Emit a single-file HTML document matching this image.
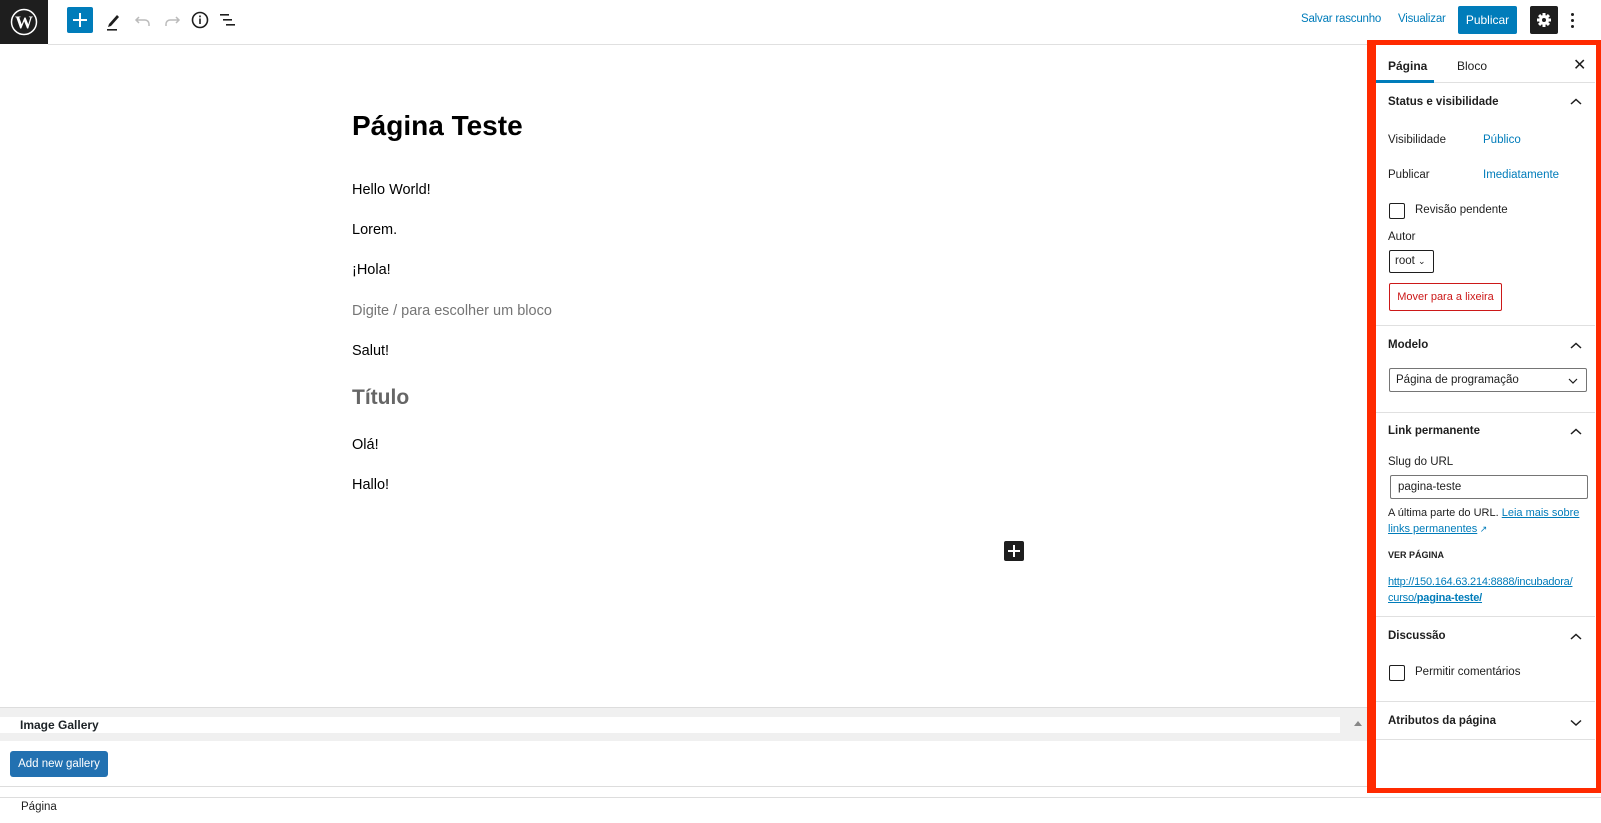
<!DOCTYPE html>
<html><head><meta charset="utf-8"><style>
*{box-sizing:border-box;margin:0;padding:0}
body{width:1601px;height:823px;position:relative;overflow:hidden;background:#fff;font-family:"Liberation Sans",Arial,sans-serif;color:#1e1e1e}
.a{position:absolute;white-space:nowrap}
.t13{font-size:13px}
.blue{color:#007cba}
.ln{position:absolute;height:1px;background:#e0e0e0}
.p{position:absolute;left:352px;font-size:15px;color:#000;line-height:18px}
.cb{position:absolute;width:16px;height:16px;border:1.5px solid #1e1e1e;border-radius:2px}
</style></head><body>
<!-- top bar -->
<div class="a" style="left:0;top:0;width:48px;height:44px;background:#1e1e1e"></div>
<svg class="a" style="left:10px;top:8px" width="28" height="28" viewBox="0 0 28 28"><circle cx="14" cy="14" r="12.5" fill="none" stroke="#fff" stroke-width="1.5"/><text x="14" y="20.5" font-family="Liberation Serif" font-weight="bold" font-size="18" fill="#fff" text-anchor="middle">W</text></svg>
<div class="ln" style="left:48px;top:44px;width:1553px"></div>
<div class="a" style="left:67px;top:7px;width:26px;height:26px;background:#007cba;border-radius:2px"></div>
<div class="a" style="left:73px;top:19px;width:14px;height:2px;background:#fff"></div>
<div class="a" style="left:79px;top:13px;width:2px;height:14px;background:#fff"></div>
<svg class="a" style="left:104px;top:10px" width="18" height="22" viewBox="0 0 18 22"><path d="M5 14 L13 5 L15 7 L7 16 L4 17 Z" fill="#1e1e1e"/><rect x="3" y="19" width="10" height="1.6" fill="#1e1e1e"/></svg>
<svg class="a" style="left:134px;top:12px" width="18" height="18" viewBox="0 0 18 18"><path d="M5 5 L2 8 L5 11 M2 8 H11 A4 4 0 0 1 15 12 V14" fill="none" stroke="#bbb" stroke-width="1.5"/></svg>
<svg class="a" style="left:163px;top:12px" width="18" height="18" viewBox="0 0 18 18"><path d="M13 5 L16 8 L13 11 M16 8 H7 A4 4 0 0 0 3 12 V14" fill="none" stroke="#bbb" stroke-width="1.5"/></svg>
<svg class="a" style="left:190px;top:10px" width="20" height="20" viewBox="0 0 20 20"><circle cx="10" cy="10" r="7.5" fill="none" stroke="#1e1e1e" stroke-width="1.6"/><rect x="9.2" y="8.5" width="1.6" height="5.5" fill="#1e1e1e"/><rect x="9.2" y="5.5" width="1.6" height="1.8" fill="#1e1e1e"/></svg>
<svg class="a" style="left:218px;top:10px" width="20" height="20" viewBox="0 0 20 20"><rect x="2" y="4" width="9" height="1.6" fill="#1e1e1e"/><rect x="5" y="9" width="9" height="1.6" fill="#1e1e1e"/><rect x="8" y="14" width="9" height="1.6" fill="#1e1e1e"/></svg>
<div class="a blue" style="left:1301px;top:13px;font-size:11.5px;letter-spacing:-0.2px">Salvar rascunho</div>
<div class="a blue" style="left:1398px;top:13px;font-size:11.5px;letter-spacing:-0.2px">Visualizar</div>
<div class="a" style="left:1458px;top:6px;width:59px;height:28px;background:#007cba;color:#fff;border-radius:2px;text-align:center;line-height:28px;font-size:12px">Publicar</div>
<div class="a" style="left:1530px;top:6px;width:28px;height:28px;background:#1e1e1e;border-radius:2px"></div>
<svg class="a" style="left:1536px;top:12px" width="16" height="16" viewBox="0 0 16 16"><g fill="#fff"><circle cx="8" cy="8" r="5"/><rect x="6.5" y="1" width="3" height="14"/><rect x="1" y="6.5" width="14" height="3"/><rect x="6.5" y="1" width="3" height="14" transform="rotate(45 8 8)"/><rect x="6.5" y="1" width="3" height="14" transform="rotate(-45 8 8)"/></g><circle cx="8" cy="8" r="2" fill="#1e1e1e"/></svg>
<div class="a" style="left:1571px;top:13px;width:3px;height:3px;background:#1e1e1e;border-radius:50%"></div>
<div class="a" style="left:1571px;top:19px;width:3px;height:3px;background:#1e1e1e;border-radius:50%"></div>
<div class="a" style="left:1571px;top:25px;width:3px;height:3px;background:#1e1e1e;border-radius:50%"></div>

<!-- content -->
<div class="a" style="left:352px;top:110px;font-size:28px;font-weight:bold;color:#000">Página Teste</div>
<div class="p" style="top:181px;font-size:14.5px">Hello World!</div>
<div class="p" style="top:221px;font-size:14.5px">Lorem.</div>
<div class="p" style="top:261px;font-size:14.5px">¡Hola!</div>
<div class="p" style="top:302px;color:#757575;font-size:14.5px">Digite / para escolher um bloco</div>
<div class="p" style="top:342px;font-size:14.5px">Salut!</div>
<div class="p" style="top:385px;font-size:21px;font-weight:bold;color:#666;line-height:26px">Título</div>
<div class="p" style="top:436px;font-size:14.5px">Olá!</div>
<div class="p" style="top:476px;font-size:14.5px">Hallo!</div>
<div class="a" style="left:1004px;top:541px;width:20px;height:20px;background:#1e1e1e;border-radius:2px"></div>
<div class="a" style="left:1008px;top:550px;width:12px;height:2px;background:#fff"></div>
<div class="a" style="left:1013px;top:545px;width:2px;height:12px;background:#fff"></div>

<!-- meta box -->
<div class="a" style="left:0;top:707px;width:1367px;height:34px;background:#f0f0f0;border-top:1px solid #ddd"></div>
<div class="a" style="left:0;top:717px;width:1340px;height:16px;background:#fff"></div>
<div class="a" style="left:20px;top:718px;font-size:12px;font-weight:bold;color:#1d2327">Image Gallery</div>
<div class="a" style="left:1354px;top:721px;width:0;height:0;border-left:4px solid transparent;border-right:4px solid transparent;border-bottom:5px solid #888"></div>
<div class="a" style="left:10px;top:751px;width:98px;height:26px;background:#2271b1;border-radius:3px;color:#fff;font-size:11.5px;text-align:center;line-height:26px">Add new gallery</div>
<div class="ln" style="left:0;top:786px;width:1367px;background:#ddd"></div>
<div class="ln" style="left:0;top:797px;width:1601px;background:#ddd"></div>
<div class="a" style="left:21px;top:801px;font-size:11.5px;color:#1e1e1e">Página</div>

<!-- sidebar -->
<div class="a" style="left:1367px;top:40px;width:234px;height:753px;border:5px solid #ff2a00;border-left-width:9px;background:#fff"></div>
<div class="a" style="left:1376px;top:45px;width:219px;height:743px">
 <div class="a" style="left:12px;top:14px;font-weight:600;font-size:12px">Página</div>
 <div class="a" style="left:81px;top:14px;font-size:12px">Bloco</div>
 <div class="a" style="left:197px;top:10px;font-size:16px">✕</div>
 <div class="a" style="left:0;top:35px;width:58px;height:3px;background:#007cba"></div>
 <div class="ln" style="left:58px;top:37px;width:161px"></div>
 <div class="a" style="left:12px;top:51px;font-weight:600;font-size:11.5px">Status e visibilidade</div>
 <svg class="a" style="left:194px;top:53px" width="12" height="8"><path d="M1 6 L6 1.5 L11 6" fill="none" stroke="#1e1e1e" stroke-width="1.5"/></svg>
 <div class="a" style="left:12px;top:89px;font-size:11.5px">Visibilidade</div>
 <div class="a blue" style="left:107px;top:89px;font-size:11.5px">Público</div>
 <div class="a" style="left:12px;top:124px;font-size:11.5px">Publicar</div>
 <div class="a blue" style="left:107px;top:124px;font-size:11.5px">Imediatamente</div>
 <div class="cb" style="left:13px;top:158px"></div>
 <div class="a" style="left:39px;top:159px;font-size:11.5px">Revisão pendente</div>
 <div class="a" style="left:12px;top:186px;font-size:11.5px">Autor</div>
 <div class="a" style="left:13px;top:205px;width:45px;height:23px;border:1px solid #1e1e1e;border-radius:2px;font-size:11.5px;padding:4px 0 0 5px">root <span style="font-size:9px">⌄</span></div>
 <div class="a" style="left:13px;top:238px;width:113px;height:28px;border:1px solid #cc1818;border-radius:2px;font-size:11px;color:#cc1818;text-align:center;line-height:26px">Mover para a lixeira</div>
 <div class="ln" style="left:0;top:280px;width:219px"></div>
 <div class="a" style="left:12px;top:294px;font-size:11.5px;font-weight:600">Modelo</div>
 <svg class="a" style="left:194px;top:297px" width="12" height="8"><path d="M1 6 L6 1.5 L11 6" fill="none" stroke="#1e1e1e" stroke-width="1.5"/></svg>
 <div class="a" style="left:13px;top:323px;width:198px;height:24px;border:1px solid #757575;border-radius:2px;font-size:11.5px;padding:5px 0 0 6px">Página de programação</div>
 <svg class="a" style="left:192px;top:333px" width="10" height="6"><path d="M1 1 L5 5 L9 1" fill="none" stroke="#1e1e1e" stroke-width="1.2"/></svg>
 <div class="ln" style="left:0;top:367px;width:219px"></div>
 <div class="a" style="left:12px;top:380px;font-size:11.5px;font-weight:600">Link permanente</div>
 <svg class="a" style="left:194px;top:383px" width="12" height="8"><path d="M1 6 L6 1.5 L11 6" fill="none" stroke="#1e1e1e" stroke-width="1.5"/></svg>
 <div class="a" style="left:12px;top:411px;font-size:11.5px">Slug do URL</div>
 <div class="a" style="left:14px;top:430px;width:198px;height:24px;border:1px solid #757575;border-radius:2px;font-size:11.5px;padding:5px 0 0 7px">pagina-teste</div>
 <div class="a" style="left:12px;top:460px;font-size:11px;line-height:16px;white-space:normal;width:205px">A última parte do URL. <span class="blue" style="text-decoration:underline">Leia mais sobre links permanentes</span><span class="blue" style="font-size:9px"> ↗</span></div>
 <div class="a" style="left:12px;top:505px;font-size:9px;font-weight:600">VER PÁGINA</div>
 <div class="a blue" style="left:12px;top:529px;font-size:11px;line-height:16px;text-decoration:underline;letter-spacing:-0.2px">http://150.164.63.214:8888/incubadora/<br>curso/<b>pagina-teste/</b></div>
 <div class="ln" style="left:0;top:571px;width:219px"></div>
 <div class="a" style="left:12px;top:585px;font-size:11.5px;font-weight:600">Discussão</div>
 <svg class="a" style="left:194px;top:588px" width="12" height="8"><path d="M1 6 L6 1.5 L11 6" fill="none" stroke="#1e1e1e" stroke-width="1.5"/></svg>
 <div class="cb" style="left:13px;top:620px"></div>
 <div class="a" style="left:39px;top:621px;font-size:11.5px">Permitir comentários</div>
 <div class="ln" style="left:0;top:656px;width:219px"></div>
 <div class="a" style="left:12px;top:670px;font-size:11.5px;font-weight:600">Atributos da página</div>
 <svg class="a" style="left:194px;top:674px" width="12" height="8"><path d="M1 1.5 L6 6 L11 1.5" fill="none" stroke="#1e1e1e" stroke-width="1.5"/></svg>
 <div class="ln" style="left:0;top:694px;width:219px"></div>
</div>
</body></html>
